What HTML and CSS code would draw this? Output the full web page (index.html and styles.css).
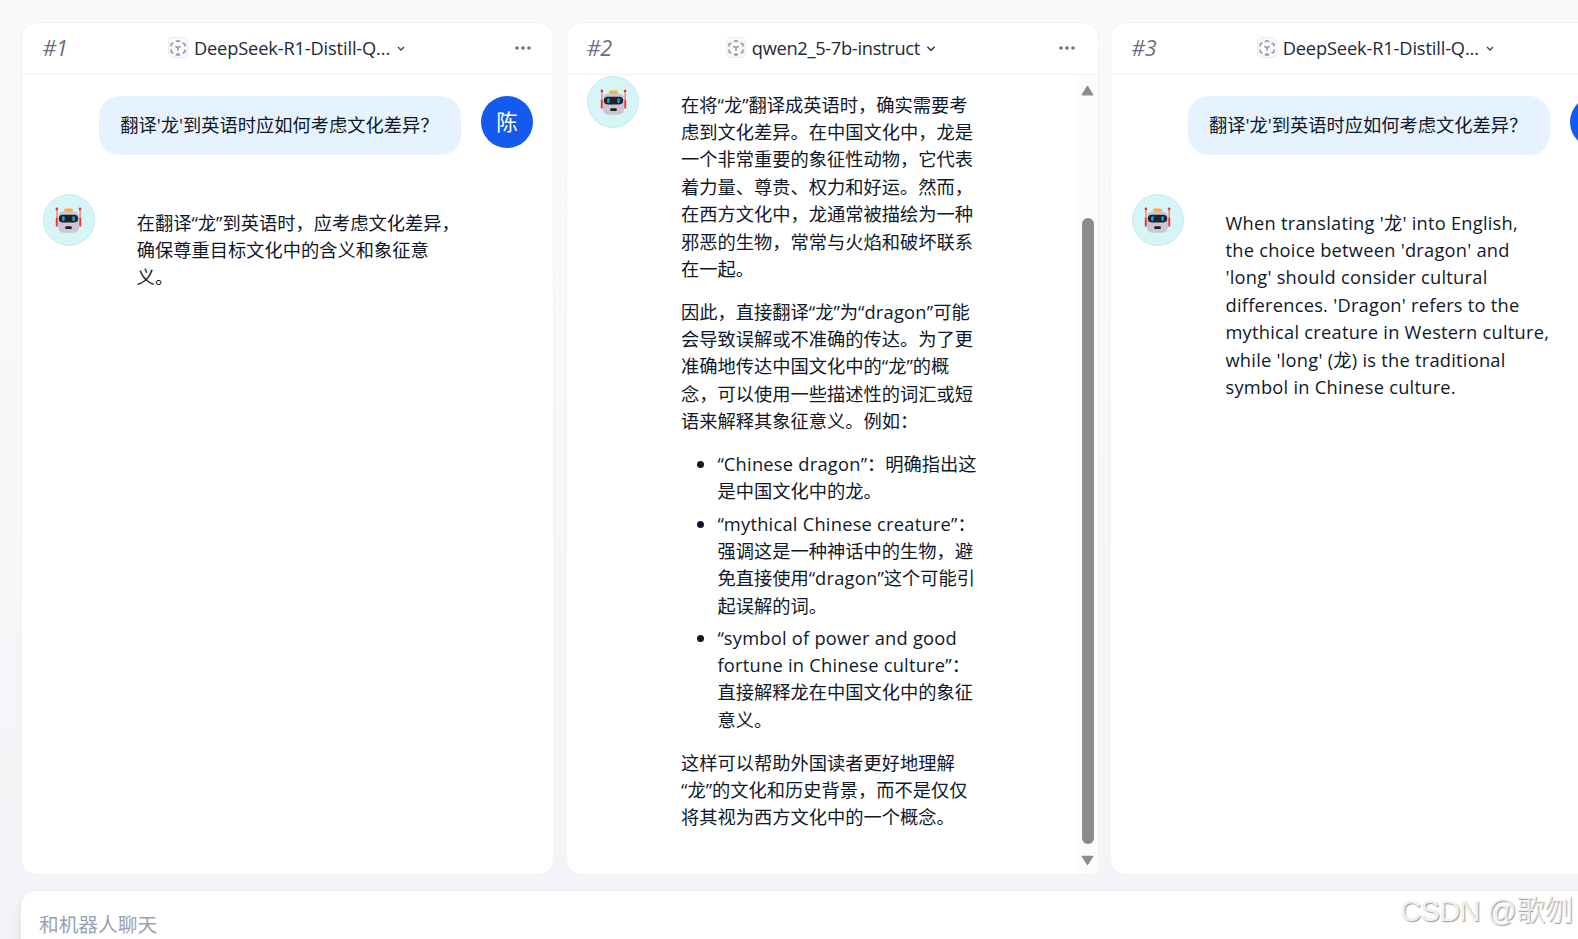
FILE: index.html
```
<!DOCTYPE html>
<html lang="zh-CN">
<head>
  <meta charset="UTF-8">
  <meta name="viewport" content="width=device-width, initial-scale=1.0">
  <title>多模型调试</title>
  <link rel="stylesheet" href="styles.css">
</head>
<body>

  <!-- shared icons -->
  <svg class="sprite" aria-hidden="true">
    <symbol id="model" viewBox="0 0 20 20">
      <g fill="none" stroke="#98a2b3" stroke-width="2" stroke-linecap="round" stroke-linejoin="round">
        <path d="M8.3 2.6 10 1.9l1.7.7M4.2 4.7l-1.8 1v1.7M15.8 4.7l1.8 1v1.7M2.4 12.4v2l1.8 1M17.6 12.4v2l-1.8 1M8.3 17.3l1.7.8 1.7-.8M10 16.3V18M7.8 8.5l2.2 1.2 2.2-1.2M10 9.7v2.6"/>
      </g>
    </symbol>
    <symbol id="arrow" viewBox="0 0 10 10">
      <path d="M2 4 5 7 8 4" fill="none" stroke="#354052" stroke-width="1.3"/>
    </symbol>
    <symbol id="more" viewBox="0 0 16 6">
      <g fill="#676f83"><circle cx="2" cy="3" r="1.8"/><circle cx="8" cy="3" r="1.8"/><circle cx="14" cy="3" r="1.8"/></g>
    </symbol>
    <symbol id="robot" viewBox="0 0 28 28">
      <path d="M2 2v17M26 2v17" stroke="#f25056" stroke-width="1"/>
      <path d="M1.8 12v7.5M26.2 12v7.5" stroke="#f8312f" stroke-width="2" stroke-linecap="round"/>
      <circle cx="2" cy="2" r="1.4" fill="#f8312f"/>
      <circle cx="26" cy="2" r="1.4" fill="#f8312f"/>
      <rect x="9.5" y="1.6" width="9" height="4.5" rx="1.6" fill="#ffb02e"/>
      <rect x="3" y="4.6" width="22" height="22" rx="5.5" fill="#cdc4d6"/>
      <rect x="4" y="8" width="20" height="8" rx="4" fill="#212121"/>
      <rect x="7.4" y="9.5" width="2.6" height="5" rx="1" fill="#00a6ed"/>
      <rect x="18" y="9.5" width="2.6" height="5" rx="1" fill="#00a6ed"/>
      <rect x="10.5" y="20" width="7" height="2.8" rx="1.3" fill="#212121"/>
    </symbol>
  </svg>

  <div class="models">
    <div class="card">
      <div class="header">
        <span class="num">#1</span>
        <div class="model">
          <span class="model-icon"><svg><use href="#model"/></svg></span>
          <span class="model-name">DeepSeek-R1-Distill-Q...</span>
          <svg class="arrow small"><use href="#arrow"/></svg>
        </div>
        <svg class="more"><use href="#more"/></svg>
      </div>
      <div class="chat">
        <div class="question">
          <div class="bubble">翻译'龙'到英语时应如何考虑文化差异？</div>
          <div class="user">陈</div>
        </div>
        <div class="answer">
          <div class="bot"><svg><use href="#robot"/></svg></div>
          <div class="text">
            <p>在翻译“龙”到英语时，应考虑文化差异，<br>确保尊重目标文化中的含义和象征意<br>义。</p>
          </div>
        </div>
      </div>
    </div>

    <div class="card">
      <div class="header">
        <span class="num">#2</span>
        <div class="model">
          <span class="model-icon"><svg><use href="#model"/></svg></span>
          <span class="model-name short">qwen2_5-7b-instruct</span>
          <svg class="arrow"><use href="#arrow"/></svg>
        </div>
        <svg class="more"><use href="#more"/></svg>
      </div>
      <div class="scroll">
        <div class="chat scrolled">
          <div class="answer">
            <div class="bot"><svg><use href="#robot"/></svg></div>
            <div class="text">
              <p>在将“龙”翻译成英语时，确实需要考<br>虑到文化差异。在中国文化中，龙是<br>一个非常重要的象征性动物，它代表<br>着力量、尊贵、权力和好运。然而，<br>在西方文化中，龙通常被描绘为一种<br>邪恶的生物，常常与火焰和破坏联系<br>在一起。</p>
              <p>因此，直接翻译“龙”为“<span class="en">dragon</span>”可能<br>会导致误解或不准确的传达。为了更<br>准确地传达中国文化中的“龙”的概<br>念，可以使用一些描述性的词汇或短<br>语来解释其象征意义。例如：</p>
              <ul>
                <li>“<span class="en">Chinese dragon</span>”：明确指出这<br>是中国文化中的龙。</li>
                <li>“<span class="en">mythical Chinese creature</span>”：<br>强调这是一种神话中的生物，避<br>免直接使用“<span class="en">dragon</span>”这个可能引<br>起误解的词。</li>
                <li>“<span class="en">symbol of power and good<br>fortune in Chinese culture</span>”：<br>直接解释龙在中国文化中的象征<br>意义。</li>
              </ul>
              <p>这样可以帮助外国读者更好地理解<br>“龙”的文化和历史背景，而不是仅仅<br>将其视为西方文化中的一个概念。</p>
            </div>
          </div>
        </div>
        <div class="scrollbar">
          <svg class="up" viewBox="0 0 12 10"><path d="M6 1.2 11 9H1z"/></svg>
          <div class="thumb"></div>
          <svg class="down" viewBox="0 0 12 10"><path d="M6 8.8 11 1H1z"/></svg>
        </div>
      </div>
    </div>

    <div class="card">
      <div class="header">
        <span class="num">#3</span>
        <div class="model">
          <span class="model-icon"><svg><use href="#model"/></svg></span>
          <span class="model-name">DeepSeek-R1-Distill-Q...</span>
          <svg class="arrow small"><use href="#arrow"/></svg>
        </div>
        <svg class="more"><use href="#more"/></svg>
      </div>
      <div class="chat">
        <div class="question">
          <div class="bubble">翻译'龙'到英语时应如何考虑文化差异？</div>
          <div class="user"></div>
        </div>
        <div class="answer">
          <div class="bot"><svg><use href="#robot"/></svg></div>
          <div class="text">
            <p class="en">When translating '龙' into English,<br>the choice between 'dragon' and<br>'long' should consider cultural<br>differences. 'Dragon' refers to the<br>mythical creature in Western culture,<br>while 'long' (龙) is the traditional<br>symbol in Chinese culture.</p>
          </div>
        </div>
      </div>
    </div>
  </div>

  <div class="input">
    <span class="placeholder">和机器人聊天</span>
  </div>
  <div class="watermark">CSDN @歌刎</div>

</body>
</html>
```
FILE: styles.css
```
* {
  box-sizing: border-box;
}
body {
  margin: 0;
  height: 939px;
  padding: 22px 0 0 21.4px;
  overflow: hidden;
  font-family: "Open Sans", "Noto Sans CJK SC", sans-serif;
  font-size: 18.25px;
  line-height: 27.34px;
  color: #101828;
  background: linear-gradient(#f9fafb, #f2f4f7);
}
svg {
  display: block;
}
.sprite {
  position: absolute;
  width: 0;
  height: 0;
}
.models {
  display: flex;
  gap: 11.4px;
  height: 853px;
}
.card {
  display: flex;
  flex-direction: column;
  flex: 0 0 533px;
  background: #fff;
  border: 1px solid #f0f2f4;
  border-radius: 15.6px;
}
.header {
  display: flex;
  align-items: center;
  justify-content: space-between;
  height: 52px;
  padding: 0 22.5px 2px 20px;
  border-bottom: 1px solid #eff1f3;
}
.num {
  width: 17px;
  font-size: 21.5px;
  font-style: italic;
  letter-spacing: -0.3px;
  color: #676f83;
}
.model {
  display: flex;
  align-items: center;
}
.model-icon {
  width: 20px;
  height: 21px;
  padding: 1px 0;
  border: 1px solid #e9ebf0;
  border-radius: 5px;
  background: #f9fafb;
}
.model-icon svg {
  width: 18px;
  height: 18px;
}
.model-name {
  width: 195px;
  margin-left: 5.5px;
  white-space: nowrap;
  letter-spacing: -0.15px;
  color: #1d2939;
}
.model-name.short {
  width: 168px;
  letter-spacing: -0.3px;
}
.arrow {
  width: 12px;
  height: 12px;
  margin-left: 5px;
}
.arrow.small {
  width: 10px;
  height: 10px;
  margin-left: 7px;
}
.more {
  width: 16px;
  height: 6px;
}
.chat {
  flex: 1;
  padding: 21px 20.5px;
}
.question {
  display: flex;
  justify-content: flex-end;
  gap: 20px;
}
.bubble {
  width: 361.5px;
  height: 58.5px;
  padding: 15px 20.8px;
  border-radius: 20.8px;
  background: #e6f3ff;
  white-space: nowrap;
}
.user {
  width: 52px;
  height: 52px;
  border-radius: 50%;
  background: #155aef;
  color: #fff;
  font-size: 21.5px;
  line-height: 52px;
  text-align: center;
}
.answer {
  display: flex;
}
.question + .answer {
  margin-top: 39.5px;
}
.bot {
  display: flex;
  align-items: center;
  justify-content: center;
  flex: none;
  width: 52px;
  height: 52px;
  border: 1px solid #c9ebec;
  border-radius: 50%;
  background: #d5f5f6;
}
.bot svg {
  width: 27px;
  height: 27px;
}
.text {
  padding: 14.8px 0 0 41.8px;
  white-space: nowrap;
}
.text p {
  margin: 0 0 15.6px;
}
.text ul {
  margin: 0 0 15.6px;
  padding-left: 36.4px;
}
.text li {
  margin: 4.8px 0;
}
.text li:first-child {
  margin-top: 0;
}
.text li:last-child {
  margin-bottom: 0;
}
.en {
  letter-spacing: 0.25px;
}
.scroll {
  display: flex;
  flex: 1;
  min-height: 0;
}
.scrolled {
  padding-top: 1px;
}
.scrollbar {
  display: flex;
  flex-direction: column;
  align-items: center;
  width: 20px;
  padding-top: 10px;
  background: #fcfcfc;
}
.scrollbar svg {
  width: 13px;
  height: 11px;
  fill: #8b8b8b;
  stroke: #8b8b8b;
  stroke-linejoin: round;
}
.thumb {
  width: 12px;
  height: 626px;
  margin: 122px 0 11px;
  border-radius: 6px;
  background: #8b8b8b;
}
.input {
  width: 1600px;
  height: 80px;
  margin: 16px 0 0 -0.4px;
  padding: 20px 18px;
  border-radius: 15.6px;
  background: #fff;
  box-shadow: 0 5px 12px rgba(16, 24, 40, 0.1);
}
.placeholder {
  font-size: 19.7px;
  color: #98a2b3;
}
.watermark {
  position: absolute;
  right: 5px;
  top: 891px;
  font-family: "Liberation Sans", "Noto Sans CJK SC", sans-serif;
  font-size: 29px;
  line-height: 40px;
  font-weight: 300;
  letter-spacing: -0.6px;
  white-space: nowrap;
  color: #f0f0f0;
  text-shadow: 1px 1px 1px #999;
}
```
